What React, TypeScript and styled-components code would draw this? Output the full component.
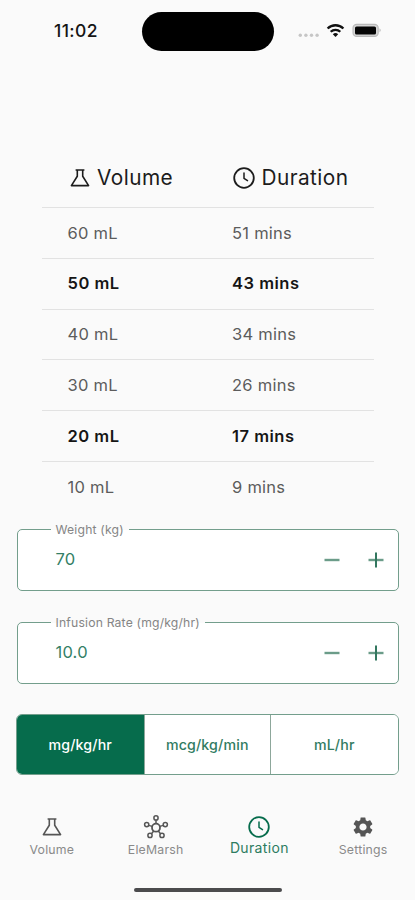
import React, { useState } from "react";
import styled, { createGlobalStyle } from "styled-components";
import { MdSettings } from "react-icons/md";

const GREEN = "#066c4c";
const BORDER = "#739e8c";

const GlobalStyle = createGlobalStyle`
  * { box-sizing: border-box; }
  body { margin: 0; background: #fafafa; font-family: Inter, "Liberation Sans", sans-serif; }
  button { font: inherit; border: 0; padding: 0; background: none; cursor: pointer; }
`;

const Screen = styled.div`
  width: 415px;
  height: 900px;
  overflow: hidden;
  background: #fafafa;
  display: flex;
  flex-direction: column;
`;

const StatusBar = styled.header`
  height: 62px;
  padding: 12px 33px 0 54px;
  display: flex;
  align-items: flex-start;
`;

const Time = styled.div`
  width: 88px;
  padding-top: 8px;
  font-size: 17.5px;
  line-height: 22px;
  font-weight: 500;
  letter-spacing: 0.4px;
  color: #151515;
`;

const Island = styled.div`
  width: 132px;
  height: 38.5px;
  border-radius: 20px;
  background: #000;
`;

const StatusIcons = styled.div`
  margin-left: auto;
  padding-top: 10px;
  display: flex;
  svg { display: block; }
`;

const Table = styled.section`
  margin: 87px 41px 0 42px;
`;

const Row = styled.div<{ $strong?: boolean }>`
  height: 50.8px;
  padding-left: 25.5px;
  padding-bottom: ${(p) => (p.$strong ? "1px" : "0")};
  display: grid;
  grid-template-columns: 164.5px 1fr;
  align-items: center;
  border-top: 1.5px solid #e2e2e2;
  font-size: 16.5px;
  letter-spacing: ${(p) => (p.$strong ? "0.5px" : "0.25px")};
  font-weight: ${(p) => (p.$strong ? 600 : 400)};
  color: ${(p) => (p.$strong ? "#151515" : "#5c5c5c")};
`;

const HeaderRow = styled.div`
  height: 58px;
  padding-left: 25.5px;
  display: grid;
  grid-template-columns: 164.5px 1fr;
  align-items: center;
  font-size: 20.8px;
  line-height: 24px;
  letter-spacing: 0.45px;
  color: #1c1c1c;
`;

const Heading = styled.div`
  display: flex;
  align-items: center;
  gap: 5.5px;
  svg { display: block; }
  span { padding-bottom: 1px; }
`;

const Form = styled.main`
  padding: 8px 16px 0 16.5px;
`;

const Field = styled.fieldset<{ $last?: boolean }>`
  margin: 0 0 ${(p) => (p.$last ? "30px" : "22px")};
  height: 71px;
  min-width: 0;
  padding: 0 0 0 34px;
  border: 0;
  position: relative;
  display: grid;
`;

const FieldBox = styled.div`
  margin: 9px 0 0 -34px;
  height: 62.5px;
  padding: 0 11px 1px 38px;
  display: flex;
  align-items: center;
  background: #fff;
  border: 1.5px solid ${BORDER};
  border-radius: 5px;
`;

const FieldLabel = styled.label`
  position: absolute;
  left: 34px;
  top: 1px;
  padding: 0 5px;
  font-size: 12.2px;
  line-height: 18px;
  letter-spacing: 0.18px;
  color: #858585;
  background: linear-gradient(#fafafa 50%, #fff 50%);
`;

const Value = styled.output`
  flex: 1;
  padding-bottom: 1.5px;
  font-size: 16.5px;
  letter-spacing: 0.2px;
  color: #347f66;
`;

const StepButton = styled.button`
  width: 22px;
  height: 40px;
  display: grid;
  place-items: center;
  & + & { margin-left: 22.5px; }
`;

const Segments = styled.div`
  height: 61.5px;
  margin-left: -0.5px;
  display: grid;
  grid-template-columns: 126.5px 126.5px 1fr;
  border: 1.5px solid ${BORDER};
  border-radius: 6px;
  overflow: hidden;
  background: #fff;
`;

const Segment = styled.button<{ $active: boolean }>`
  font-size: 14.2px;
  font-weight: 500;
  letter-spacing: 0.15px;
  color: ${(p) => (p.$active ? "#fff" : "#327c62")};
  background: ${(p) => (p.$active ? GREEN : "#fff")};
  & + & { border-left: 1px solid #8da79b; }
  &:last-child { margin-left: -0.5px; }
`;

const Nav = styled.nav`
  margin-top: 32px;
  height: 79px;
  display: grid;
  grid-template-columns: repeat(4, 1fr);
`;

const NavItem = styled.button<{ $active?: boolean }>`
  padding-top: 8px;
  display: flex;
  flex-direction: column;
  align-items: center;
  color: ${(p) => (p.$active ? GREEN : "#555")};
  svg { display: block; }
  span {
    margin-top: ${(p) => (p.$active ? "-1px" : "1px")};
    font-size: ${(p) => (p.$active ? "14px" : "12.3px")};
    line-height: 20px;
    letter-spacing: ${(p) => (p.$active ? "0.35px" : "0.2px")};
    color: ${(p) => (p.$active ? "#2c7c60" : "#8a8a8a")};
  }
`;

const HomeIndicator = styled.div`
  width: 148px;
  height: 4.5px;
  margin: 1.5px auto 0;
  border-radius: 3px;
  background: #4b4b4d;
`;

const Flask = () => (
  <svg width="24" height="24" viewBox="0 0 24 24" fill="none" stroke="currentColor" strokeWidth="1.6" strokeLinejoin="round">
    <path d="M7.6 4h8.8M9.3 4v6.2L3.4 19.6h17.2L14.7 10.2V4" />
  </svg>
);

const Clock = () => (
  <svg width="24" height="24" viewBox="0 0 24 24" fill="none" stroke="currentColor" strokeWidth="1.8" strokeLinecap="round" strokeLinejoin="round">
    <circle cx="12" cy="12" r="9.8" />
    <path d="M12 7v5.4l3.5 2.3" strokeWidth="1.5" />
  </svg>
);

const Hub = () => (
  <svg width="26" height="24" viewBox="0 0 26 24" fill="none" stroke="currentColor" strokeWidth="1.5">
    <circle cx="13" cy="12.7" r="4" strokeWidth="1.8" />
    <path d="M13 4.9v3.8M9.2 11.4l-3.5-1M16.8 11.4l3.5-1M10.7 16l-2.2 2.7M15.3 16l2.2 2.7" />
    <circle cx="13" cy="2.9" r="2.1" />
    <circle cx="3.7" cy="9.6" r="2.1" />
    <circle cx="22.3" cy="9.6" r="2.1" />
    <circle cx="7" cy="20.4" r="2.1" />
    <circle cx="19" cy="20.4" r="2.1" />
  </svg>
);

const StatusGlyphs = () => (
  <svg width="84" height="18" viewBox="0 0 84 18">
    <g fill="#c6c6c6">
      <circle cx="2.3" cy="13.3" r="1.7" />
      <circle cx="7.9" cy="13.3" r="1.7" />
      <circle cx="13.5" cy="13.3" r="1.7" />
      <circle cx="19.1" cy="13.3" r="1.7" />
    </g>
    <g fill="none" stroke="#111" strokeWidth="2.3">
      <path d="M29.6 6.5a11.2 11.2 0 0 1 15.8 0" />
      <path d="M32.7 9.8a6.8 6.8 0 0 1 9.6 0" />
    </g>
    <path d="M37.5 15l-2.7-2.8a3.9 3.9 0 0 1 5.4 0z" fill="#111" />
    <rect x="55" y="2.4" width="25.2" height="12" rx="3.7" fill="#d6d6d6" stroke="#b9b9b9" strokeWidth="1.1" />
    <rect x="57" y="4.4" width="21" height="8.1" rx="1.6" fill="#050505" />
    <path d="M81.5 6.3q2.5 2 0 4z" fill="#bdbdbd" />
  </svg>
);

const StepGlyph = ({ plus }: { plus?: boolean }) => (
  <svg width="16" height="16" viewBox="0 0 16 16" fill="none" stroke="#6b9c89" strokeWidth="2.4">
    <path d="M.5 8h15" />
    {plus && <path d="M8 .5v15" stroke="#33775f" strokeWidth="2" />}
  </svg>
);

const rows = [
  { volume: 60, minutes: 51 },
  { volume: 50, minutes: 43, strong: true },
  { volume: 40, minutes: 34 },
  { volume: 30, minutes: 26 },
  { volume: 20, minutes: 17, strong: true },
  { volume: 10, minutes: 9 },
];

const units = ["mg/kg/hr", "mcg/kg/min", "mL/hr"];

interface StepperProps {
  label: string;
  initial: number;
  digits: number;
  last?: boolean;
}

function Stepper({ label, initial, digits, last }: StepperProps) {
  const [value, setValue] = useState(initial);
  return (
    <Field $last={last}>
      <FieldBox>
        <Value>{value.toFixed(digits)}</Value>
        <StepButton aria-label="Decrease" onClick={() => setValue(Math.max(0, value - 1))}>
          <StepGlyph />
        </StepButton>
        <StepButton aria-label="Increase" onClick={() => setValue(value + 1)}>
          <StepGlyph plus />
        </StepButton>
      </FieldBox>
      <FieldLabel>{label}</FieldLabel>
    </Field>
  );
}

export default function App() {
  const [unit, setUnit] = useState(units[0]);
  return (
    <>
      <GlobalStyle />
      <Screen>
        <StatusBar>
          <Time>11:02</Time>
          <Island />
          <StatusIcons><StatusGlyphs /></StatusIcons>
        </StatusBar>
        <Table>
          <HeaderRow>
            <Heading><Flask /><span>Volume</span></Heading>
            <Heading><Clock /><span>Duration</span></Heading>
          </HeaderRow>
          {rows.map((r) => (
            <Row key={r.volume} $strong={r.strong}>
              <span>{r.volume} mL</span>
              <span>{r.minutes} mins</span>
            </Row>
          ))}
        </Table>
        <Form>
          <Stepper label="Weight (kg)" initial={70} digits={0} />
          <Stepper label="Infusion Rate (mg/kg/hr)" initial={10} digits={1} last />
          <Segments>
            {units.map((u) => (
              <Segment key={u} $active={u === unit} onClick={() => setUnit(u)}>{u}</Segment>
            ))}
          </Segments>
        </Form>
        <Nav>
          <NavItem><Flask /><span>Volume</span></NavItem>
          <NavItem><Hub /><span>EleMarsh</span></NavItem>
          <NavItem $active><Clock /><span>Duration</span></NavItem>
          <NavItem><MdSettings size={24} /><span>Settings</span></NavItem>
        </Nav>
        <HomeIndicator />
      </Screen>
    </>
  );
}
